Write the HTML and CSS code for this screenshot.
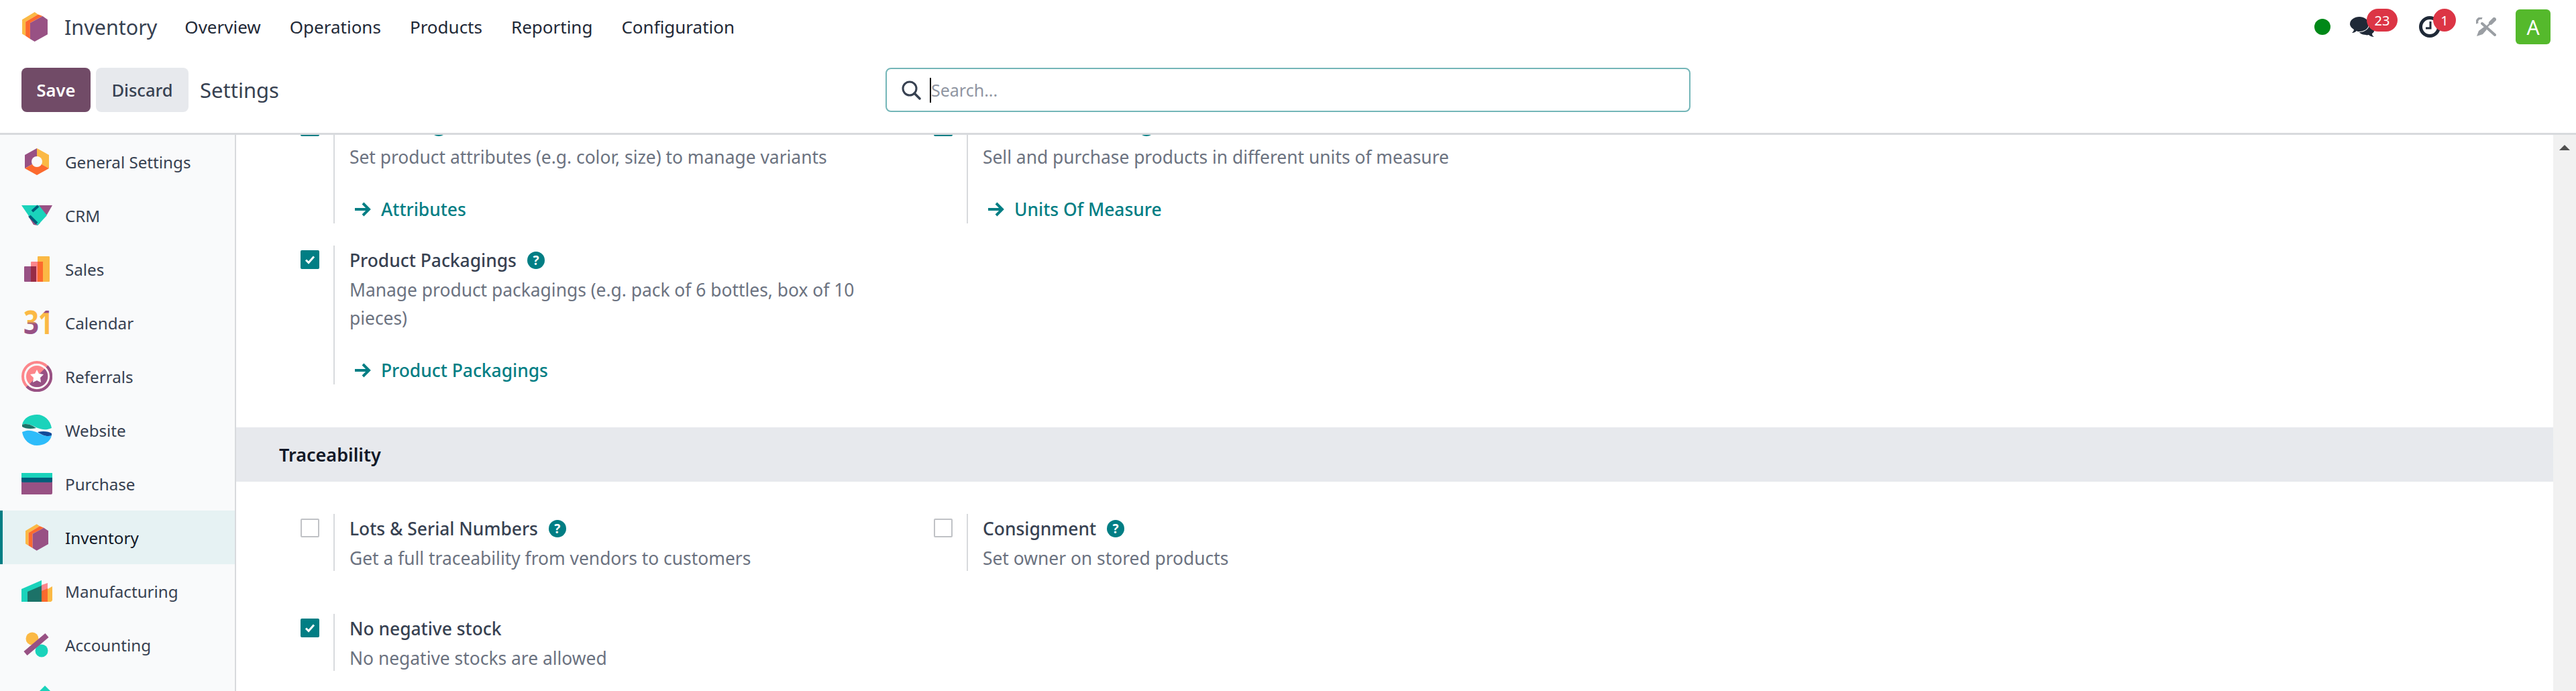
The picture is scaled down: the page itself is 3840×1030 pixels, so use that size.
FILE: index.html
```html
<!DOCTYPE html>
<html lang="en">

<head>
    <meta charset="UTF-8">
    <title>Settings - Inventory</title>
    <link rel="stylesheet" href="styles.css">
</head>

<body>
    <header class="navbar">
        <svg class="nav-logo" viewBox="40 37 112 130">
            <polygon fill="#fbb945" points="40,70 95,37 110,47 55,80 55,142 40,133" />
            <polygon fill="#fc6a2e" points="55,80 110,47 130,55 75,85 75,155 55,142" />
            <polygon fill="#985184" points="75,85 130,55 152,70 152,135 95,167 75,155" />
        </svg>
        <span class="app-name">Inventory</span>
        <nav class="nav-menu">
            <a>Overview</a>
            <a>Operations</a>
            <a>Products</a>
            <a>Reporting</a>
            <a>Configuration</a>
        </nav>
        <div class="systray">
            <span class="status-dot"></span>
            <div class="tray-item tray-chat">
                <svg width="38" height="32" viewBox="0 0 38 32">
                    <path fill="#1f2937" d="M24 9c7 0 13 4 13 10 0 3-2 6-4 7 0 2 1 4 3 5-3 0-6-1-8-3-1 0-3 1-4 0-6 0-10-3-12-6z" />
                    <ellipse cx="14" cy="12" rx="15" ry="12" fill="#fff" />
                    <path fill="#1f2937" d="M14 1c7 0 14 4 14 11s-7 11-14 11c-2 0-3 0-4-1-2 2-4 3-7 3 1-1 3-3 3-5-3-2-6-5-6-8C0 5 7 1 14 1z" />
                </svg>
                <span class="badge badge-chat">23</span>
            </div>
            <div class="tray-item tray-clock">
                <svg width="32" height="32" viewBox="0 0 32 32">
                    <circle cx="16" cy="16" r="13.5" fill="none" stroke="#1f2937" stroke-width="5" />
                    <path fill="none" stroke="#1f2937" stroke-width="3" d="M17 8v10h-7" />
                </svg>
                <span class="badge badge-clock">1</span>
            </div>
            <svg class="tray-tools" width="30" height="28" viewBox="0 0 30 28">
                <path fill="none" stroke="#9a9ea3" stroke-width="4" stroke-linecap="round" d="M9 9l19 17" />
                <path fill="none" stroke="#9a9ea3" stroke-width="3.5" d="M9 1.500A5.500 5.500 0 0 0 2 9" />
                <path fill="none" stroke="#9a9ea3" stroke-width="6" stroke-linecap="round" d="M27 3l-5 5" />
                <path fill="none" stroke="#9a9ea3" stroke-width="2.5" d="M22 8l-9 9" />
                <path fill="#9a9ea3" d="M12 14l4 4-6 7-9 3 3-8z" />
            </svg>
            <span class="avatar">A</span>
        </div>
    </header>

    <div class="control-panel">
        <div class="cp-left">
            <button class="btn btn-save">Save</button>
            <button class="btn btn-discard">Discard</button>
            <span class="cp-title">Settings</span>
        </div>
        <div class="search-box">
            <svg width="30" height="30" viewBox="0 0 30 30">
                <circle cx="13" cy="13" r="10" fill="none" stroke="#374151" stroke-width="3" />
                <path stroke="#374151" stroke-width="3.5" stroke-linecap="round" d="M20 20l8 8" />
            </svg>
            <input class="search-input" type="text" placeholder="Search...">
            <span class="search-caret"></span>
        </div>
    </div>

    <div class="main">
        <aside class="sidebar">
            <a class="side-item">
                <svg class="side-icon" viewBox="0 0 46 46">
                    <polygon fill="#985184" points="23,3 5,13 5,33 23,23" />
                    <polygon fill="#fbb945" points="23,3 41,13 41,33 23,23" />
                    <polygon fill="#fc6a2e" points="5,33 23,23 41,33 23,43" />
                    <circle cx="23" cy="23" r="8" fill="#f9fafb" />
                </svg>
                General Settings
            </a>
            <a class="side-item">
                <svg class="side-icon" viewBox="0 0 46 46">
                    <polygon fill="#985184" points="23,8 46,8 38,22 33,22" />
                    <polygon fill="#985184" points="10,24 15,20 28,34 24,38 18,37" />
                    <polygon fill="#1ad3bb" points="0,8 26,8 38,23 24,38 11,24" />
                    <path fill="none" stroke="#005e7a" stroke-width="4" d="M16 17l9-8M12 24l11 11" />
                </svg>
                CRM
            </a>
            <a class="side-item">
                <svg class="side-icon" viewBox="0 0 46 46">
                    <rect x="24" y="4" width="18" height="38" rx="1" fill="#fbb945" />
                    <rect x="14" y="12" width="18" height="30" rx="1" fill="#fc868b" />
                    <rect x="24" y="12" width="8" height="30" fill="#fc6a2e" />
                    <rect x="4" y="19" width="18" height="23" rx="1" fill="#985184" />
                    <rect x="14" y="19" width="8" height="23" fill="#982c46" />
                </svg>
                Sales
            </a>
            <a class="side-item">
                <svg class="side-icon" viewBox="0 0 46 46">
                    <defs>
                        <linearGradient id="cal3" x1="0" y1="0" x2="0" y2="1">
                            <stop offset="0.5" stop-color="#fbb945" />
                            <stop offset="0.56" stop-color="#985184" />
                        </linearGradient>
                        <linearGradient id="cal1" x1="0" y1="0" x2="0" y2="1">
                            <stop offset="0.3" stop-color="#985184" />
                            <stop offset="0.32" stop-color="#fbb945" />
                        </linearGradient>
                    </defs>
                    <text class="cal-digit" x="3" y="40" textLength="23" lengthAdjust="spacingAndGlyphs" fill="url(#cal3)">3</text>
                    <text class="cal-digit" x="25" y="40" textLength="22" lengthAdjust="spacingAndGlyphs" fill="url(#cal1)">1</text>
                </svg>
                Calendar
            </a>
            <a class="side-item">
                <svg class="side-icon" viewBox="0 0 46 46">
                    <circle cx="23" cy="23" r="21" fill="none" stroke="#fc868b" stroke-width="4" />
                    <path fill="none" stroke="#985184" stroke-width="4" d="M38 8A21 21 0 0 1 8 38" />
                    <circle cx="23" cy="23" r="16" fill="#fc868b" />
                    <path fill="#985184" d="M34.500 11.500A16 16 0 0 1 12 34.500L23 23z" />
                    <polygon fill="#fff" points="23,13 26,19 33,20 28,25 29,32 23,29 17,32 18,25 13,20 20,19" />
                </svg>
                Referrals
            </a>
            <a class="side-item">
                <svg class="side-icon" viewBox="0 0 46 46">
                    <path fill="#1ad3bb" d="M1 15C3 5 13 0 23 0c11 0 20 8 22 20-9 4-15 2-21 0C16 16 8 12 1 15z" />
                    <path fill="#1c7268" d="M1 15c7-3 15 1 21 5-8 2-17 1-21-2z" />
                    <path fill="#2ebcfa" d="M45 31C43 41 33 46 23 46 12 46 3 38 1 26c9-4 15-2 21 0 8 4 16 8 23 5z" />
                    <path fill="#124a98" d="M45 31c-7 3-15-1-21-5 8-2 17-1 21 2z" />
                </svg>
                Website
            </a>
            <a class="side-item">
                <svg class="side-icon" viewBox="0 0 46 46">
                    <path fill="#985184" d="M0 14h46v23a2 2 0 0 1-2 2H0z" />
                    <path fill="#005e7a" d="M0 14h46v5a2 2 0 0 1-2 2H2a2 2 0 0 1-2-2z" />
                    <rect y="7" width="46" height="7" fill="#1ad3bb" />
                </svg>
                Purchase
            </a>
            <a class="side-item side-item-active">
                <svg class="side-icon side-icon-inv" viewBox="40 37 112 130">
                    <polygon fill="#fbb945" points="40,70 95,37 110,47 55,80 55,142 40,133" />
                    <polygon fill="#fc6a2e" points="55,80 110,47 130,55 75,85 75,155 55,142" />
                    <polygon fill="#985184" points="75,85 130,55 152,70 152,135 95,167 75,155" />
                </svg>
                Inventory
            </a>
            <a class="side-item">
                <svg class="side-icon" viewBox="0 0 46 46">
                    <polygon fill="#1ad3bb" points="0,20 30,7 30,39 0,39" />
                    <polygon fill="#1c7268" points="9,24 30,15 30,39 9,39" />
                    <polygon fill="#fc868b" points="30,14 39,11 39,39 30,39" />
                    <polygon fill="#fc6a2e" points="30,23 39,19 39,39 30,39" />
                    <polygon fill="#fbb945" points="39,20 46,16 46,37 44,39 39,39" />
                </svg>
                Manufacturing
            </a>
            <a class="side-item">
                <svg class="side-icon" viewBox="0 0 46 46">
                    <circle cx="16" cy="14" r="9.500" fill="#fbb945" />
                    <circle cx="30" cy="32" r="9.500" fill="#1ad3bb" />
                    <path stroke="#985184" stroke-width="8" d="M6 36L38 9" />
                </svg>
                Accounting
            </a>
            <a class="side-item">
                <svg class="side-icon" viewBox="0 0 46 46">
                    <polygon fill="#1ad3bb" points="35,4 46,15 35,26 24,15" />
                </svg>
            </a>
        </aside>

        <div class="content">
            <div class="settings">
                <div class="setting-grid grid-top">
                    <div class="setting">
                        <span class="check check-on"><svg viewBox="0 0 28 28"><path d="M8 14.500l4 4 8-9" /></svg></span>
                        <div class="setting-body">
                            <div class="setting-title">Variants <i class="help">?</i></div>
                            <div class="setting-desc">Set product attributes (e.g. color, size) to manage variants</div>
                            <a class="setting-link"><svg viewBox="0 0 26 24"><path d="M2 12h21M14 3l9 9-9 9" /></svg>Attributes</a>
                        </div>
                    </div>
                    <div class="setting">
                        <span class="check check-on"><svg viewBox="0 0 28 28"><path d="M8 14.500l4 4 8-9" /></svg></span>
                        <div class="setting-body">
                            <div class="setting-title">Units of Measure <i class="help">?</i></div>
                            <div class="setting-desc">Sell and purchase products in different units of measure</div>
                            <a class="setting-link"><svg viewBox="0 0 26 24"><path d="M2 12h21M14 3l9 9-9 9" /></svg>Units Of Measure</a>
                        </div>
                    </div>
                    <div class="setting">
                        <span class="check check-on"><svg viewBox="0 0 28 28"><path d="M8 14.500l4 4 8-9" /></svg></span>
                        <div class="setting-body">
                            <div class="setting-title">Product Packagings <i class="help">?</i></div>
                            <div class="setting-desc">Manage product packagings (e.g. pack of 6 bottles, box of 10 pieces)</div>
                            <a class="setting-link"><svg viewBox="0 0 26 24"><path d="M2 12h21M14 3l9 9-9 9" /></svg>Product Packagings</a>
                        </div>
                    </div>
                </div>

                <h2 class="section-title">Traceability</h2>

                <div class="setting-grid grid-trace">
                    <div class="setting">
                        <span class="check"></span>
                        <div class="setting-body">
                            <div class="setting-title">Lots &amp; Serial Numbers <i class="help">?</i></div>
                            <div class="setting-desc">Get a full traceability from vendors to customers</div>
                        </div>
                    </div>
                    <div class="setting">
                        <span class="check"></span>
                        <div class="setting-body">
                            <div class="setting-title">Consignment <i class="help">?</i></div>
                            <div class="setting-desc">Set owner on stored products</div>
                        </div>
                    </div>
                    <div class="setting">
                        <span class="check check-on"><svg viewBox="0 0 28 28"><path d="M8 14.500l4 4 8-9" /></svg></span>
                        <div class="setting-body">
                            <div class="setting-title">No negative stock</div>
                            <div class="setting-desc">No negative stocks are allowed</div>
                        </div>
                    </div>
                </div>
            </div>
        </div>

        <div class="scrollbar"><span class="scroll-arrow"></span></div>
    </div>
</body>

</html>
```

FILE: styles.css
```css
* {
    box-sizing: border-box;
}

body {
    margin: 0;
    width: 3840px;
    height: 1030px;
    overflow: hidden;
    display: flex;
    flex-direction: column;
    background-color: #fff;
    font-family: "Noto Sans", sans-serif;
    font-size: 26.4px;
    color: #374151;
}

/* top bar */
.navbar {
    height: 80px;
    flex: none;
    display: flex;
    align-items: center;
    padding-left: 33px;
    padding-right: 38px;
}

.nav-logo {
    width: 38px;
    height: 44px;
}

.app-name {
    margin-left: 25px;
    margin-right: 41px;
    font-size: 30.5px;
}

.nav-menu {
    display: flex;
    gap: 43px;
    color: #1f2937;
    font-size: 26px;
}

.systray {
    margin-left: auto;
    display: flex;
    align-items: center;
}

.status-dot {
    width: 24px;
    height: 24px;
    border-radius: 50%;
    background-color: #008818;
}

.tray-item {
    position: relative;
    display: flex;
}

.tray-chat {
    margin-left: 29px;
}

.tray-clock {
    margin-left: 65px;
}

.tray-tools {
    margin-left: 53px;
}

.badge {
    position: absolute;
    top: -11px;
    height: 34px;
    border-radius: 17px;
    background-color: #dc3545;
    color: #fff;
    font-size: 20px;
    display: flex;
    align-items: center;
    justify-content: center;
}

.badge-chat {
    left: 25px;
    width: 46px;
}

.badge-clock {
    left: 21px;
    width: 34px;
}

.avatar {
    margin-left: 29px;
    width: 52px;
    height: 52px;
    border-radius: 6px;
    background-color: #55b92c;
    color: #fff;
    font-size: 30px;
    display: flex;
    align-items: center;
    justify-content: center;
}

/* save bar */
.control-panel {
    height: 121px;
    flex: none;
    display: flex;
    padding-left: 32px;
    padding-top: 21px;
    border-bottom: 3px solid #d8dadd;
}

.cp-left {
    width: 1288px;
    height: 66px;
    display: flex;
    align-items: center;
}

.btn {
    height: 66px;
    border: none;
    border-radius: 8px;
    font-family: inherit;
    font-size: 25.5px;
    font-weight: 500;
    padding: 0;
}

.btn-save {
    width: 103px;
    background-color: #714b67;
    color: #fff;
    font-weight: 600;
}

.btn-discard {
    width: 138px;
    margin-left: 8px;
    background-color: #e7e9ed;
    color: #374151;
}

.cp-title {
    margin-left: 17px;
    font-size: 31px;
}

.search-box {
    position: relative;
    width: 1200px;
    height: 66px;
    display: flex;
    align-items: center;
    padding-left: 21px;
    border: 2px solid #74b6b8;
    border-radius: 8px;
}

.search-input {
    flex: 1;
    margin-left: 15px;
    border: none;
    outline: none;
    font-family: inherit;
    font-size: 25px;
    padding: 0;
}

.search-input::placeholder {
    color: #8f95a1;
}

.search-caret {
    position: absolute;
    left: 64px;
    top: 13px;
    width: 2px;
    height: 37px;
    background-color: #000;
}

/* below the bars */
.main {
    flex: 1;
    display: flex;
    min-height: 0;
}

.sidebar {
    width: 352px;
    flex: none;
    overflow: hidden;
    background-color: #f9fafb;
    border-right: 2px solid #d8dadd;
}

.side-item {
    height: 80px;
    display: flex;
    align-items: center;
    gap: 19px;
    padding-left: 32px;
    font-size: 24.2px;
}

.side-item-active {
    background-color: #e6f2f3;
    border-left: 4px solid #017e84;
    padding-left: 28px;
    color: #111827;
}

.side-icon {
    width: 46px;
    height: 46px;
    flex: none;
}

.side-icon-inv {
    padding: 3px 6px;
}

.cal-digit {
    font-family: "Noto Sans", sans-serif;
    font-size: 49px;
    font-weight: 700;
}

.content {
    flex: 1;
    min-width: 0;
    overflow: hidden;
}

.settings {
    margin-top: -33px;
}

.setting-grid {
    display: grid;
    grid-template-columns: 944px 1fr;
    padding-left: 96px;
}

.grid-top {
    row-gap: 33px;
}

.grid-trace {
    row-gap: 64px;
}

.setting {
    display: flex;
    align-items: flex-start;
}

.check {
    width: 28px;
    height: 28px;
    margin-top: 7px;
    margin-right: 21px;
    flex: none;
    border: 2px solid #c0c2c6;
    border-radius: 2px;
    background-color: #fff;
}

.check-on {
    border: none;
    background-color: #017e84;
}

.check-on svg {
    display: block;
    fill: none;
    stroke: #fff;
    stroke-width: 3;
}

.setting-body {
    width: 800px;
    padding: 1px 0 0 22px;
    border-left: 2px solid #d8dadd;
    line-height: 42px;
}

.setting-title {
    font-weight: 500;
    color: #374151;
    display: flex;
    align-items: center;
    gap: 16px;
}

.setting-desc {
    margin-top: 2px;
    color: #6b7280;
}

.grid-trace .setting-desc {
    margin-bottom: -2px;
}

.setting-link {
    margin-top: 36px;
    display: flex;
    align-items: center;
    color: #017e84;
    font-weight: 500;
}

.setting-link svg {
    width: 26px;
    height: 24px;
    margin-left: 6px;
    margin-right: 15px;
    fill: none;
    stroke: #017e84;
    stroke-width: 4;
}

.help {
    width: 26px;
    height: 26px;
    border-radius: 50%;
    background-color: #017e84;
    color: #fff;
    font-size: 19px;
    font-style: normal;
    font-weight: 700;
    line-height: 26px;
    text-align: center;
}

.section-title {
    height: 81px;
    margin: 64px 0 48px;
    padding-left: 64px;
    background-color: #e7e9ed;
    color: #111827;
    font-size: 27px;
    font-weight: 600;
    line-height: 81px;
}

.scrollbar {
    width: 34px;
    flex: none;
    background-color: #f1f1f1;
    display: flex;
    justify-content: center;
    padding-top: 15px;
}

.scroll-arrow {
    width: 0;
    height: 0;
    border-left: 8px solid transparent;
    border-right: 8px solid transparent;
    border-bottom: 8px solid #505050;
}
```
